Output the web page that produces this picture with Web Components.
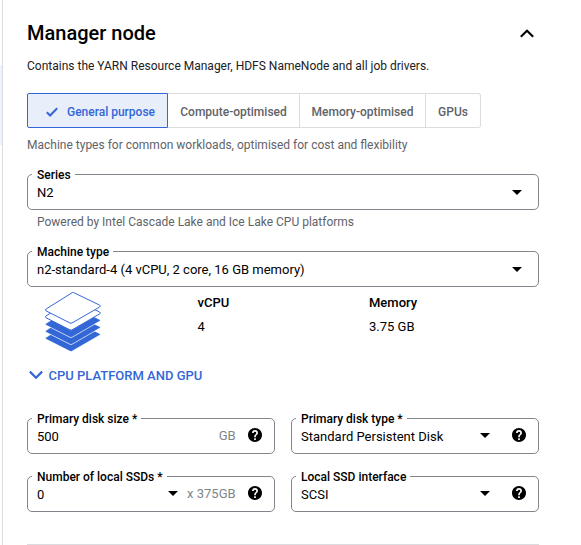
<!DOCTYPE html>
<html lang="en-GB">
<head>
<meta charset="utf-8">
<title>Manager node</title>
<style>
html,body{margin:0;height:100%;background:#fff;overflow:hidden}
body{font-family:Roboto,"Liberation Sans",sans-serif;color:#000}
</style>
</head>
<body>
<cluster-page></cluster-page>
<script>
const define = (name, html, setup) => {
  const tpl = document.createElement('template');
  tpl.innerHTML = html;
  customElements.define(name, class extends HTMLElement {
    constructor() {
      super();
      this.attachShadow({mode: 'open'}).append(tpl.content.cloneNode(true));
    }
    connectedCallback() { if (setup) setup(this, this.shadowRoot); }
  });
};

define('help-icon', `
<style>:host{display:block;width:14px;height:14px}svg{display:block}</style>
<svg width="14" height="14" viewBox="2 2 20 20"><path d="M12 2C6.48 2 2 6.48 2 12s4.48 10 10 10 10-4.48 10-10S17.52 2 12 2zm1.2 17h-2.4v-2.4h2.4V19zm2.2-7.8-.9.92c-.9.9-1.3 1.4-1.3 3.03h-2.4v-.6c0-1.1.45-2.1 1.17-2.83l1.24-1.26c.37-.36.59-.86.59-1.41a1.8 1.8 0 0 0-3.6 0H7.8a4.2 4.2 0 0 1 8.4 0c0 .84-.34 1.6-.8 2.15z"/></svg>`);

define('drop-arrow', `
<style>:host{display:block;width:10px;height:5px}svg{display:block}</style>
<svg width="10" height="5" viewBox="0 0 10 5"><path d="M0 0h10L5 5z"/></svg>`);

define('outlined-field', `
<style>
:host{display:flex;position:relative;box-sizing:border-box;height:36px;border:1px solid #80868b;border-radius:5px;align-items:center;padding:0 12px 0 9px;min-width:0}
label{position:absolute;left:4px;top:-7px;height:14px;padding:0 4px 0 5px;background:#fff;font-weight:500;font-size:12px;line-height:14px;white-space:nowrap}
.value{flex:1;font-size:13px;line-height:16px;white-space:nowrap;padding-top:1px}
slot[name=end]{display:flex;align-items:center}
</style>
<label></label><span class="value"><slot></slot></span><slot name="end"></slot>`,
(el, root) => { root.querySelector('label').textContent = el.getAttribute('label'); });

define('type-tab', `
<style>
:host{display:flex;box-sizing:border-box;height:35px;align-items:center;justify-content:center;border:1px solid #dadce0;border-left-width:0;font-weight:500;font-size:12px;line-height:16px;padding-top:2px;color:#5f6368;white-space:nowrap}
:host([selected]){border:1px solid #3367d6;border-radius:2px 0 0 2px;background:#e9eefb;color:#3367d6;padding-left:6px}
:host([last]){border-radius:0 3px 3px 0}
svg{display:none;margin-right:9px}
:host([selected]) svg{display:block}
</style>
<svg width="12" height="10" viewBox="0 0 12 10"><path d="M.8 5.3 4.1 8.5 11.2 1.2" fill="none" stroke="currentColor" stroke-width="2"/></svg><slot></slot>`);

define('spec-item', `
<style>
:host{display:block;font-size:13px;line-height:16px}
b{display:block;font-weight:500;margin-bottom:8px}
</style><b></b><slot></slot>`,
(el, root) => { root.querySelector('b').textContent = el.getAttribute('label'); });

define('layer-stack', `
<style>:host{display:block;width:58px;height:62px}svg{display:block}</style>
<svg width="58" height="62" viewBox="0 0 58 62" stroke-linejoin="round"></svg>`,
(el, root) => {
  const tops = [28.3, 21.3, 14.3, 6.9, 0];
  root.querySelector('svg').innerHTML = tops.map((y, i) =>
    `<path transform="translate(0 ${y})" d="M28.3 1.6Q29 1.2 29.7 1.6L55.6 14.1Q57.2 15 55.6 16L28 32Q27 32.5 26 32L2.1 19.9Q.6 18.9 2.1 18Z" fill="${i < 3 ? '#3367d6' : '#fff'}" stroke="${i < 3 ? '#fff' : '#3367d6'}" stroke-width="${i < 3 ? .7 : 1}"/>`).join('');
});

define('cluster-page', `
<style>
:host{display:flex;height:545px;width:581px}
.rail{width:2px;border-right:1px solid #dadce0;padding-top:65px;box-sizing:content-box;flex:none;height:480px}
.rail i{display:block;height:80px;background:#eef3fc}
main{width:512px;margin-left:24px;display:flex;flex-direction:column}
header{display:flex;justify-content:space-between;align-items:center;height:26px;margin-top:20px}
h1{margin:0;font-size:20px;line-height:26px;font-weight:500}
header svg{margin-right:5px}
p{margin:0;font-size:12px;line-height:16px;white-space:nowrap}
.intro{margin-top:12px;color:#202124}
.tabs{display:flex;margin-top:19px}
.muted{color:#5f6368}
.hint{margin-top:9px}
.series{margin-top:21px}
.help{margin:4px 0 0 10px}
.machine{margin-top:21px}
.end{display:flex;align-items:center;color:#80868b;font-size:13px;line-height:16px}
.end drop-arrow{margin-top:-1px}
.end help-icon{margin-top:-2px}
.specs{display:grid;grid-template-columns:170.5px 171.5px 1fr;height:70px}
.specs layer-stack{margin:4px 0 0 17px}
.specs spec-item{margin-top:8px}
.expand{display:flex;align-items:center;height:20px;margin-top:8px;font-weight:500;font-size:13px;color:#3367d6;white-space:nowrap}
.expand svg{margin:0 5.5px 0 2px}
.grid{display:grid;grid-template-columns:1fr 1fr;gap:22px 16px;margin-top:33px}
hr{border:0;height:1px;background:#dadce0;width:100%;margin:32px 0 0}
</style>
<div class="rail"><i></i></div>
<main>
<header><h1>Manager node</h1><svg width="14" height="9" viewBox="0 0 14 9"><path d="M.8 7.8 7 1.7l6.2 6.1" fill="none" stroke="#000" stroke-width="2.1"/></svg></header>
<p class="intro">Contains the YARN Resource Manager, HDFS NameNode and all job drivers.</p>
<div class="tabs"><type-tab selected style="width:141px">General purpose</type-tab><type-tab style="width:132px">Compute-optimised</type-tab><type-tab style="width:126px">Memory-optimised</type-tab><type-tab last style="width:55px">GPUs</type-tab></div>
<p class="hint muted">Machine types for common workloads, optimised for cost and flexibility</p>
<outlined-field class="series" label="Series">N2<drop-arrow slot="end" style="margin-right:4px"></drop-arrow></outlined-field>
<p class="help muted">Powered by Intel Cascade Lake and Ice Lake CPU platforms</p>
<outlined-field class="machine" label="Machine type">n2-standard-4 (4 vCPU, 2 core, 16 GB memory)<drop-arrow slot="end" style="margin-right:4px"></drop-arrow></outlined-field>
<div class="specs"><layer-stack></layer-stack><spec-item label="vCPU">4</spec-item><spec-item label="Memory">3.75 GB</spec-item></div>
<div class="expand"><svg width="14" height="10" viewBox="0 0 14 10"><path d="m.9 1.6 6.1 6.1 6.1-6.1" fill="none" stroke="currentColor" stroke-width="2.2"/></svg>CPU PLATFORM AND GPU</div>
<div class="grid">
<outlined-field label="Primary disk size *">500<span slot="end" class="end">GB<help-icon style="margin-left:12.4px"></help-icon></span></outlined-field>
<outlined-field label="Primary disk type *">Standard Persistent Disk<span slot="end" class="end"><drop-arrow></drop-arrow><help-icon style="margin-left:22px"></help-icon></span></outlined-field>
<outlined-field label="Number of local SSDs *">0<span slot="end" class="end"><drop-arrow style="margin-right:9px"></drop-arrow>x 375GB<help-icon style="margin-left:12.4px"></help-icon></span></outlined-field>
<outlined-field label="Local SSD interface">SCSI<span slot="end" class="end"><drop-arrow></drop-arrow><help-icon style="margin-left:22px"></help-icon></span></outlined-field>
</div>
<hr>
</main>`);
</script>
</body>
</html>
